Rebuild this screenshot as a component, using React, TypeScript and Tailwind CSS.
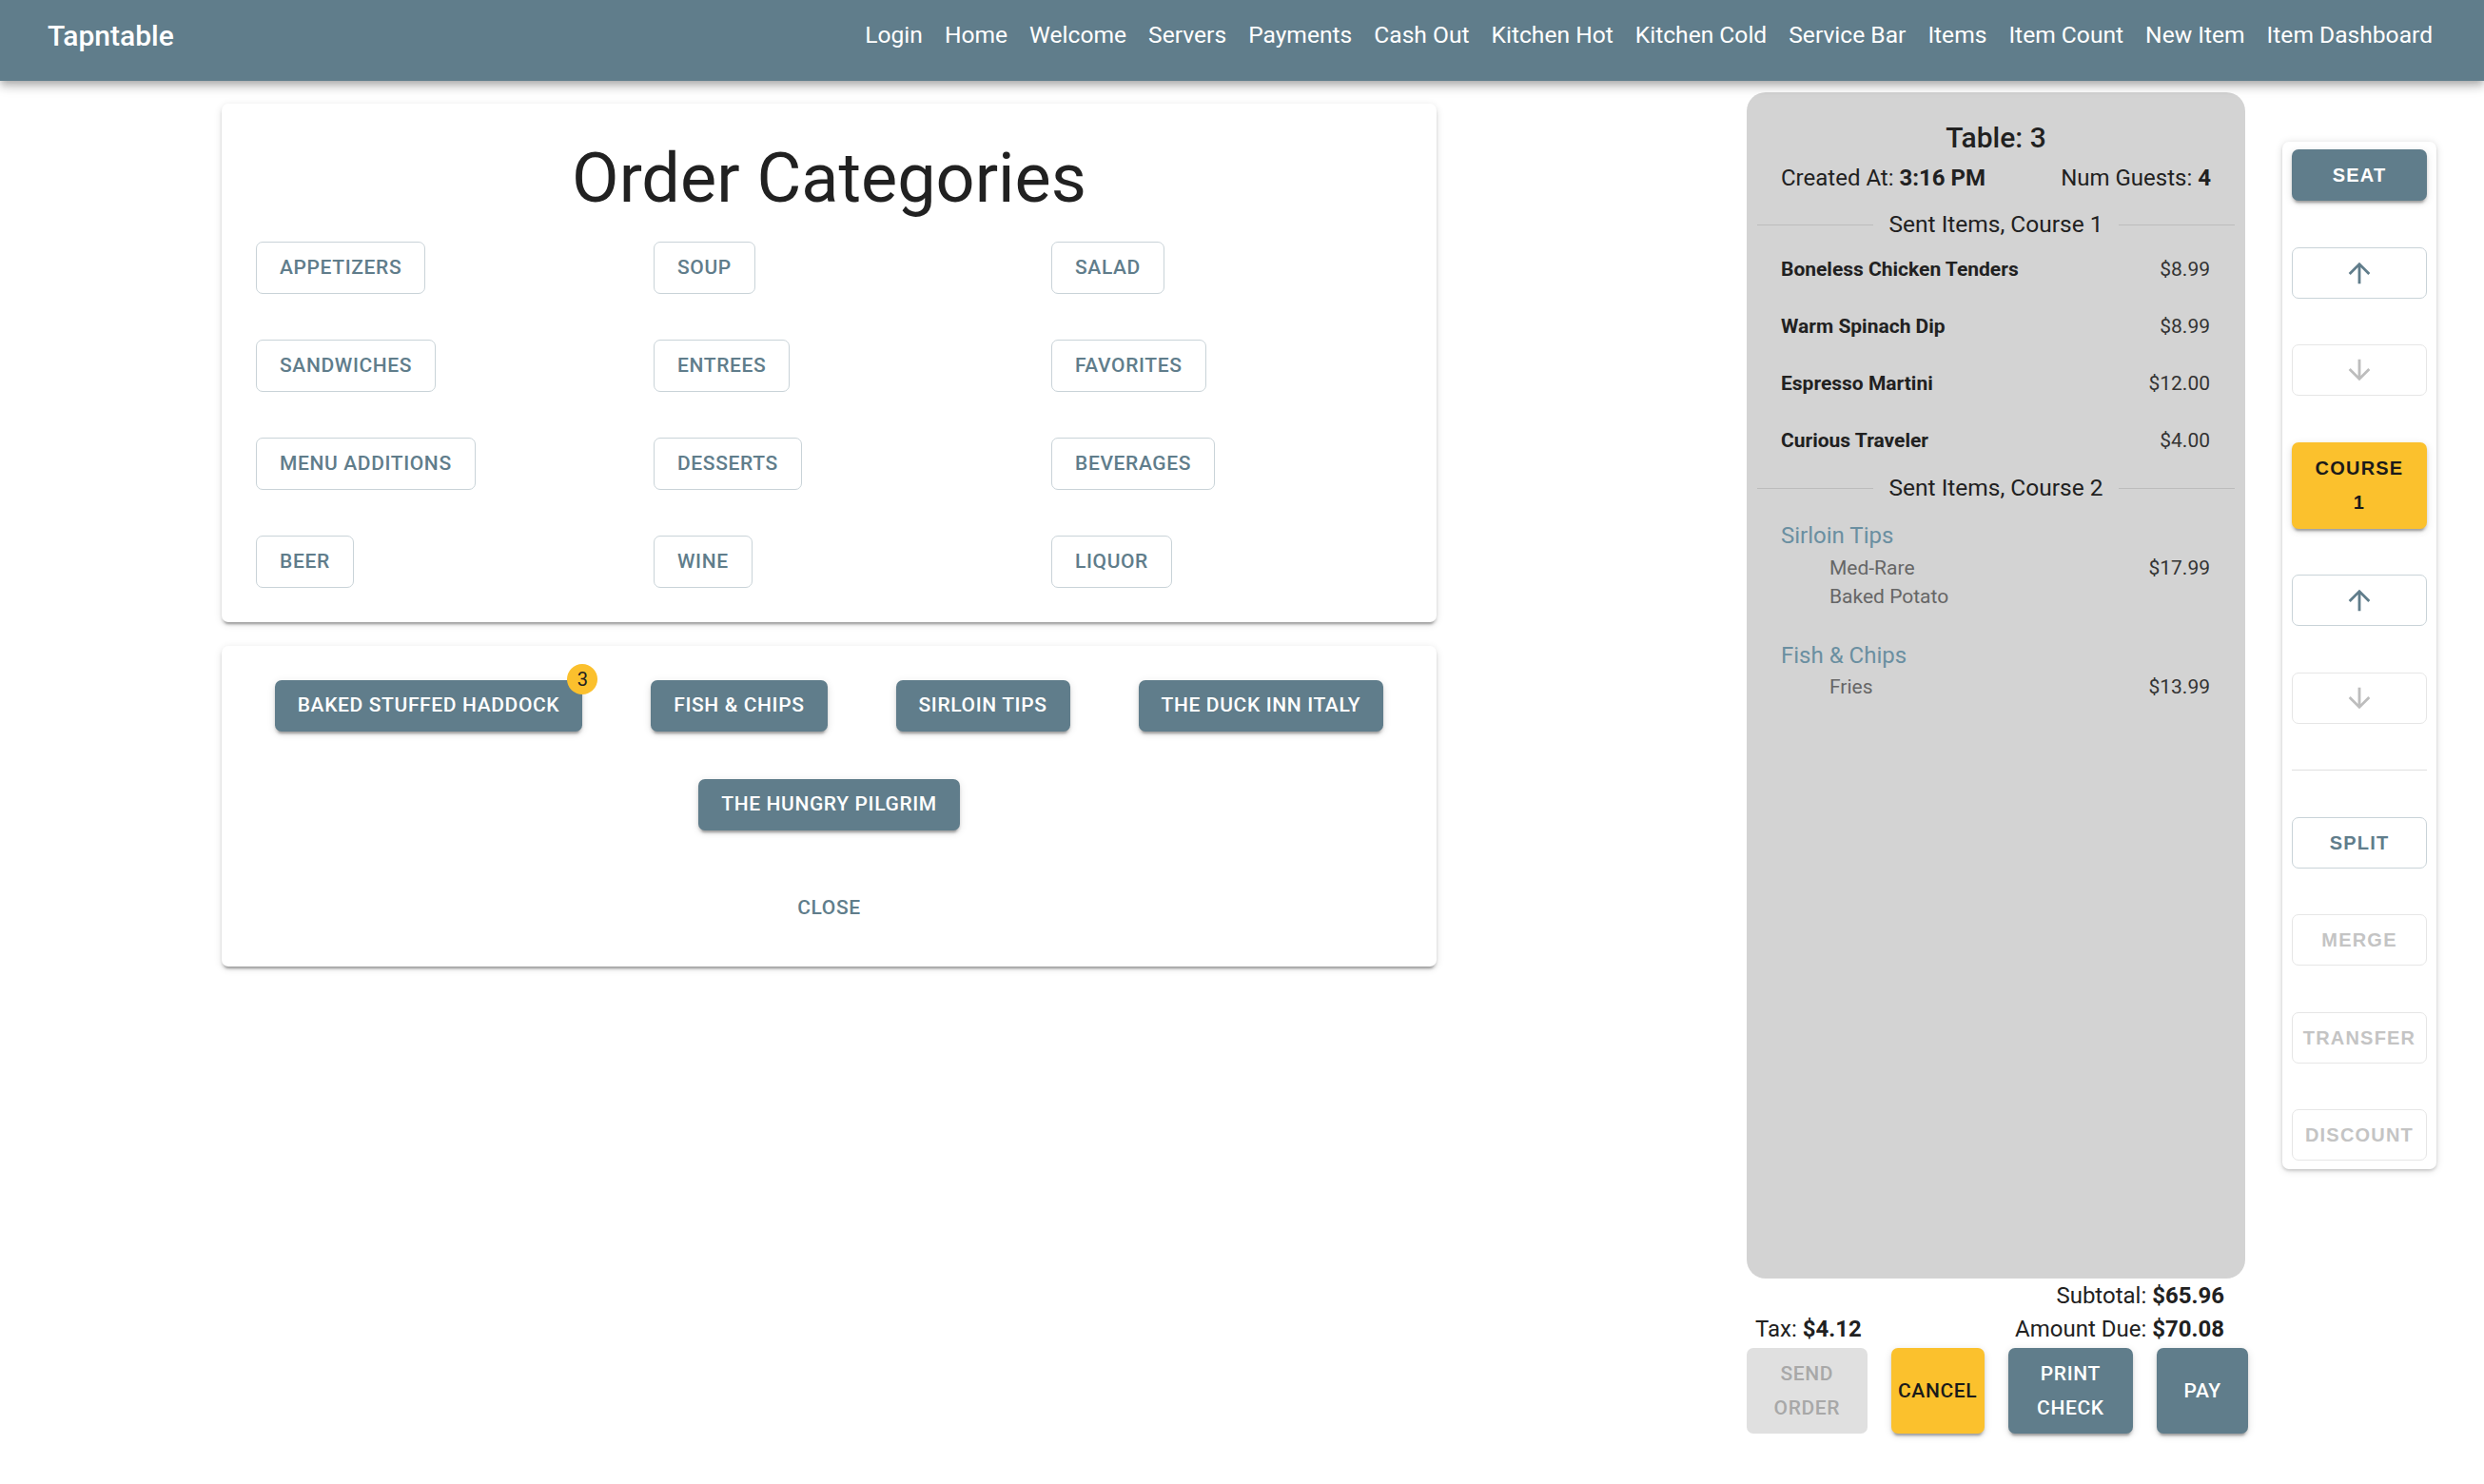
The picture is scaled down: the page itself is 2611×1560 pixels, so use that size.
const navLinks = [
  'Login',
  'Home',
  'Welcome',
  'Servers',
  'Payments',
  'Cash Out',
  'Kitchen Hot',
  'Kitchen Cold',
  'Service Bar',
  'Items',
  'Item Count',
  'New Item',
  'Item Dashboard',
];

const categories = [
  'Appetizers', 'Soup', 'Salad',
  'Sandwiches', 'Entrees', 'Favorites',
  'Menu Additions', 'Desserts', 'Beverages',
  'Beer', 'Wine', 'Liquor',
];

const items = ['Baked Stuffed Haddock', 'Fish & Chips', 'Sirloin Tips', 'The Duck Inn Italy', 'The Hungry Pilgrim'];

const course1 = [
  { name: 'Boneless Chicken Tenders', price: '$8.99' },
  { name: 'Warm Spinach Dip', price: '$8.99' },
  { name: 'Espresso Martini', price: '$12.00' },
  { name: 'Curious Traveler', price: '$4.00' },
];

const cardShadow =
  'shadow-[0_5px_2px_-3px_rgba(0,0,0,0.2),0_3px_3px_0_rgba(0,0,0,0.14),0_2px_8px_0_rgba(0,0,0,0.12)]';
const btnShadow =
  'shadow-[0_5px_2px_-3px_rgba(0,0,0,0.2),0_3px_3px_0_rgba(0,0,0,0.14),0_2px_8px_0_rgba(0,0,0,0.12)]';

function UpIcon({ disabled }: { disabled?: boolean }) {
  return (
    <svg viewBox="0 0 24 24" className={`w-[34px] h-[34px] ${disabled ? 'fill-[#bdbdbd]' : 'fill-[#607d8b]'}`}>
      <path d="M4 12l1.41 1.41L11 7.83V20h2V7.83l5.58 5.59L20 12l-8-8-8 8z" />
    </svg>
  );
}

function DownIcon({ disabled }: { disabled?: boolean }) {
  return (
    <svg viewBox="0 0 24 24" className={`w-[34px] h-[34px] ${disabled ? 'fill-[#bdbdbd]' : 'fill-[#607d8b]'}`}>
      <path d="M20 12l-1.41-1.41L13 16.17V4h-2v12.17l-5.58-5.59L4 12l8 8 8-8z" />
    </svg>
  );
}

function CourseDivider({ label }: { label: string }) {
  return (
    <div className="flex items-center gap-[16px] px-[11px] h-[32px]">
      <div className="flex-1 h-px bg-[#bcbcbc]" />
      <span className="text-[24.5px] text-[#212121]">{label}</span>
      <div className="flex-1 h-px bg-[#bcbcbc]" />
    </div>
  );
}

function SideButton({ label, disabled }: { label: string; disabled?: boolean }) {
  return (
    <button
      className={`h-[54px] w-full rounded-[7px] border font-['Liberation_Sans',Arial,sans-serif] font-bold text-[20px] tracking-[0.06em] uppercase ${
        disabled ? 'border-[#e6e6e6] text-[#c4c4c4]' : 'border-[#c9d3d8] text-[#607d8b]'
      }`}
    >
      {label}
    </button>
  );
}

function ArrowButton({ up, disabled }: { up?: boolean; disabled?: boolean }) {
  return (
    <button
      className={`h-[54px] w-full rounded-[7px] border flex items-center justify-center ${
        disabled ? 'border-[#e6e6e6]' : 'border-[#c9d3d8]'
      }`}
    >
      {up ? <UpIcon disabled={disabled} /> : <DownIcon disabled={disabled} />}
    </button>
  );
}

export default function App() {
  return (
    <div className="min-h-[1560px] bg-white font-['Roboto',sans-serif] text-[#212121]">
      <header className="relative z-10 h-[85px] bg-[#607d8b] flex items-center pl-[50px] pr-[54px] pb-[11px] shadow-[0_3px_7px_-2px_rgba(0,0,0,0.2),0_7px_8px_0_rgba(0,0,0,0.14),0_2px_17px_0_rgba(0,0,0,0.12)]">
        <div className="text-white text-[30px] font-medium">Tapntable</div>
        <nav className="ml-auto flex items-center gap-[23px]">
          {navLinks.map((l) => (
            <a key={l} className="text-white text-[24.6px]">
              {l}
            </a>
          ))}
        </nav>
      </header>

      <div className="flex items-start">
        {/* Left column */}
        <div className="ml-[233px] w-[1277px] pt-[24px] flex flex-col gap-[25px]">
          <section className={`bg-white rounded-[7px] ${cardShadow} px-[36px] pt-[34px] pb-[36px]`}>
            <h1 className="text-center text-[72px] leading-[89px] font-normal text-[#212121]">Order Categories</h1>
            <div className="mt-[22px] grid grid-cols-[418px_418px_1fr] gap-y-[48px]">
              {categories.map((c) => (
                <div key={c}>
                  <button className="h-[55px] px-[24px] rounded-[7px] border border-[#c9d3d8] text-[#607d8b] text-[21px] font-medium uppercase tracking-[0.03em]">
                    {c}
                  </button>
                </div>
              ))}
            </div>
          </section>

          <section className={`bg-white rounded-[7px] ${cardShadow} px-[36px] pt-[36px] pb-[34px] flex flex-col items-center`}>
            <div className="flex flex-wrap justify-center gap-x-[72px] gap-y-[50px]">
              {items.map((it, i) => (
                <div key={it} className="relative">
                  <button
                    className={`h-[54px] px-[24px] rounded-[7px] bg-[#607d8b] text-white text-[21px] font-medium uppercase tracking-[0.03em] ${btnShadow}`}
                  >
                    {it}
                  </button>
                  {i === 0 && (
                    <span className="absolute -top-[17px] -right-[16px] w-[32px] h-[32px] rounded-full bg-[#fbc02d] flex items-center justify-center text-[20px] text-[#212121]">
                      3
                    </span>
                  )}
                </div>
              ))}
            </div>
            <button className="mt-[54px] h-[55px] px-[14px] text-[#607d8b] text-[21px] font-medium uppercase tracking-[0.03em]">
              Close
            </button>
          </section>
        </div>

        {/* Ticket */}
        <div className="ml-[326px] w-[527px] pt-[12px]">
          <div className="w-[524px] h-[1247px] rounded-[20px] bg-[#d3d3d3] pt-[28px]">
            <div className="text-center text-[30px] leading-[40px] font-medium">Table: 3</div>
            <div className="mt-[6px] px-[36px] flex justify-between text-[24px] leading-[32px]">
              <span>
                Created At: <b className="font-bold">3:16 PM</b>
              </span>
              <span>
                Num Guests: <b className="font-bold">4</b>
              </span>
            </div>
            <div className="mt-[17px]">
              <CourseDivider label="Sent Items, Course 1" />
            </div>
            <div className="mt-[2px] pr-[37px] pl-[36px]">
              {course1.map((it) => (
                <div key={it.name} className="h-[60px] flex items-center justify-between text-[21px]">
                  <span className="font-bold">{it.name}</span>
                  <span className="text-[#333]">{it.price}</span>
                </div>
              ))}
            </div>
            <div className="mt-[3px]">
              <CourseDivider label="Sent Items, Course 2" />
            </div>
            <div className="pr-[37px] pl-[36px] mt-[18px]">
              <div className="text-[24px] leading-[32px] text-[#6a8fa1]">Sirloin Tips</div>
              <div className="mt-[3px] flex justify-between text-[21px] leading-[30px]">
                <span className="pl-[51px] text-[#666]">Med-Rare</span>
                <span className="text-[#333]">$17.99</span>
              </div>
              <div className="text-[21px] leading-[30px] pl-[51px] text-[#666]">Baked Potato</div>
              <div className="mt-[31px] text-[24px] leading-[32px] text-[#6a8fa1]">Fish &amp; Chips</div>
              <div className="mt-[2px] flex justify-between text-[21px] leading-[30px]">
                <span className="pl-[51px] text-[#666]">Fries</span>
                <span className="text-[#333]">$13.99</span>
              </div>
            </div>
          </div>

          <div className="w-[524px] pr-[22px] pl-[9px] text-[24px] leading-[32px]">
            <div className="mt-[2px] text-right">
              Subtotal: <b className="font-bold">$65.96</b>
            </div>
            <div className="mt-[3px] flex justify-between">
              <span>
                Tax: <b className="font-bold">$4.12</b>
              </span>
              <span>
                Amount Due: <b className="font-bold">$70.08</b>
              </span>
            </div>
          </div>

          <div className="mt-[4px] flex gap-[25px] text-[21px] leading-[36px] font-medium text-center">
            <button className="w-[127px] h-[90px] rounded-[7px] bg-[#e0e0e0] text-[#a8a8a8] uppercase tracking-[0.03em]">
              Send
              <br />
              Order
            </button>
            <button className={`w-[98px] h-[90px] rounded-[7px] bg-[#fbc12d] text-[#1a1a1a] uppercase tracking-[0.03em] ${btnShadow}`}>
              Cancel
            </button>
            <button className={`w-[132px] h-[90px] rounded-[7px] bg-[#607d8b] text-white uppercase tracking-[0.03em] ${btnShadow}`}>
              Print
              <br />
              Check
            </button>
            <button className={`w-[96px] h-[90px] rounded-[7px] bg-[#607d8b] text-white uppercase tracking-[0.03em] ${btnShadow}`}>
              Pay
            </button>
          </div>
        </div>

        {/* Side controls */}
        <div className="ml-[36px] mt-[64px] w-[162px] bg-white rounded-[7px] shadow-[0_2px_3px_0_rgba(0,0,0,0.14),0_1px_8px_0_rgba(0,0,0,0.14)] px-[10px] pt-[8px] pb-[9px] flex flex-col gap-[48.5px]">
          <button
            className={`h-[54px] w-full rounded-[7px] bg-[#607d8b] text-white font-['Liberation_Sans',Arial,sans-serif] font-bold text-[20px] tracking-[0.06em] ${btnShadow}`}
          >
            SEAT
          </button>
          <ArrowButton up />
          <ArrowButton disabled />
          <button
            className={`h-[91px] w-full rounded-[7px] bg-[#fbc12d] text-[#1a1a1a] font-['Liberation_Sans',Arial,sans-serif] font-bold text-[20px] leading-[36px] tracking-[0.06em] ${btnShadow}`}
          >
            COURSE
            <br />1
          </button>
          <ArrowButton up />
          <ArrowButton disabled />
          <div className="h-px bg-[#e0e0e0]" />
          <SideButton label="Split" />
          <SideButton label="Merge" disabled />
          <SideButton label="Transfer" disabled />
          <SideButton label="Discount" disabled />
        </div>
      </div>
    </div>
  );
}
